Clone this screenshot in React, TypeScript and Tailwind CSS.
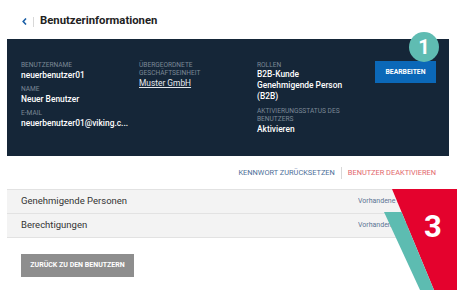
export default function App() {
  const label = "text-[6.6px] leading-[8px] uppercase text-[#7b8896]";
  const value = "text-[8.4px] leading-[12px] text-white font-medium";
  return (
    <div className="relative w-[457px] h-[290px] overflow-hidden bg-white font-['Roboto',sans-serif]">
      <div className="flex items-center h-[39px] pl-[22px] pt-[4px]">
        <svg width="5" height="7" viewBox="0 0 5 7">
          <path d="M4 0.5 L1.2 3.5 L4 6.5" stroke="#1b5fa6" strokeWidth="1.6" fill="none" />
        </svg>
        <div className="ml-[6px] w-px h-[10px] bg-[#d8d8d8]" />
        <div className="ml-[6px] text-[11.3px] font-bold text-[#222]">Benutzerinformationen</div>
      </div>

      <div className="ml-[7px] w-[442px] h-[117px] bg-[#152638] pt-[22px] pl-[14px] grid grid-cols-[118px_118px_118px_61px]">
        <div>
          <div className={label}>Benutzername</div>
          <div className={value + " mb-[4px]"}>neuerbenutzer01</div>
          <div className={label}>Name</div>
          <div className={value + " mb-[4px]"}>Neuer Benutzer</div>
          <div className={label}>E-Mail</div>
          <div className={value}>neuerbenutzer01@viking.c...</div>
        </div>
        <div>
          <div className={label}>
            Übergeordnete
            <br />
            Geschäftseinheit
          </div>
          <div className="text-[8.4px] leading-[12px] text-[#e6e9ee] underline">Muster GmbH</div>
        </div>
        <div>
          <div className={label}>Rollen</div>
          <div className="text-[8.4px] leading-[11px] text-white font-medium mb-[5px]">
            B2B-Kunde
            <br />
            Genehmigende Person
            <br />
            (B2B)
          </div>
          <div className={label}>
            Aktivierungsstatus des
            <br />
            Benutzers
          </div>
          <div className={value}>Aktivieren</div>
        </div>
        <div>
          <div className="h-[22px] w-[61px] bg-[#0b68b8] flex items-center justify-center text-white text-[6.8px] font-bold">
            BEARBEITEN
          </div>
        </div>
      </div>

      <div className="flex items-center justify-end h-[33px] pr-[21px] text-[7.4px]">
        <span className="text-[#4d6f98]">KENNWORT ZURÜCKSETZEN</span>
        <div className="mx-[6px] w-px h-[12px] bg-[#d8d8d8]" />
        <span className="text-[#e2686c]">BENUTZER DEAKTIVIEREN</span>
      </div>

      <div className="ml-[7px] w-[442px] border-t border-[#e2e2e2]">
        <div className="flex items-center h-[24px] bg-[#f3f3f3] border-b border-[#e2e2e2] pl-[14px] pr-[13px]">
          <span className="text-[9.5px] text-[#333]">Genehmigende Personen</span>
          <span className="ml-auto w-[78px] whitespace-nowrap overflow-hidden text-[7px] text-[#5b7393]">Vorhandene anzeigen</span>
        </div>
        <div className="flex items-center h-[24px] bg-[#f3f3f3] border-b border-[#e2e2e2] pl-[14px] pr-[13px]">
          <span className="text-[9.5px] text-[#333]">Berechtigungen</span>
          <span className="ml-auto w-[78px] whitespace-nowrap overflow-hidden text-[7px] text-[#5b7393]">Vorhandene anzeigen</span>
        </div>
      </div>

      <div className="ml-[21px] mt-[16px] w-[113px] h-[23px] bg-[#8e8e8e] flex items-center justify-center text-white text-[7px] font-bold">
        ZURÜCK ZU DEN BENUTZERN
      </div>

      <div className="absolute left-[409px] top-[32px] w-[30px] h-[30px] rounded-full bg-[#5fbcb2] flex items-center justify-center text-white text-[20px] font-bold">
        1
      </div>

      <svg className="absolute left-0 top-0 pointer-events-none" width="457" height="290" viewBox="0 0 457 290">
        <polygon points="392,189 457,189 457,290 434,290" fill="#e4022d" />
        <polygon points="384,212 401.5,212 434,290 420,290" fill="#5dbcb1" />
      </svg>
      <div className="absolute left-[418px] top-[207px] w-[30px] text-center text-white text-[31px] leading-[40px] font-bold">
        3
      </div>
    </div>
  );
}
